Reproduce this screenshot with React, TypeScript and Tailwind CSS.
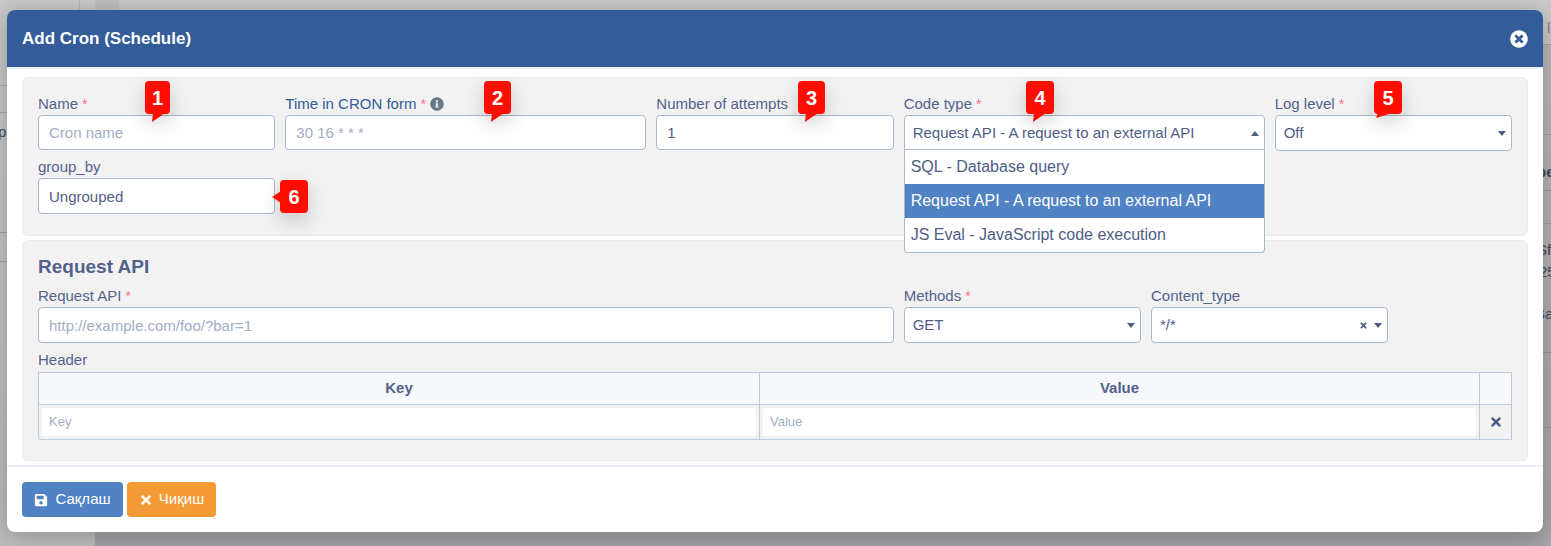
import React from 'react';
import { FaInfoCircle, FaSave, FaTimes, FaTimesCircle } from 'react-icons/fa';

const Req = () => <span className="text-[#f8727f] ml-[4px] text-[14px]">*</span>;

const Label = ({ text, required, blue }: { text: string; required?: boolean; blue?: boolean }) => (
  <div className={`h-[20px] leading-[20px] text-[15px] whitespace-nowrap ${blue ? 'text-[#335c98]' : 'text-[#53628a]'}`}>
    {text}
    {required && <Req />}
  </div>
);

const Input = ({ placeholder, value, height = 'h-[35px]' }: { placeholder?: string; value?: string; height?: string }) => (
  <div className={`${height} mt-[1px] rounded-[4px] border border-[#a9b7cd] bg-white px-[10px] pt-[2px] flex items-center text-[15px]`}>
    {value ? <span className="text-[#4f5d85]">{value}</span> : <span className="text-[#a0aec6]">{placeholder}</span>}
  </div>
);

const Arrow = ({ up }: { up?: boolean }) => (
  <svg width="8" height="5" viewBox="0 0 8 5" className="shrink-0">
    <path d={up ? 'M0 5 L4 0 L8 5 Z' : 'M0 0 L8 0 L4 5 Z'} fill="#4f5d85" />
  </svg>
);

const Select = ({ value, clear }: { value: string; clear?: boolean }) => (
  <div className="mt-[1px] h-[36px] rounded-[4px] border border-[#a9b7cd] bg-white pl-[8px] pr-[5px] flex items-center text-[15px] text-[#4f5d85]">
    <span className="flex-1">{value}</span>
    <span className="flex items-center">
      {clear && <FaTimes className="text-[9px] mr-[6px]" />}
      <Arrow />
    </span>
  </div>
);

type Tail = 'down' | 'downFlat' | 'left';

const Callout = ({ n, className, tail }: { n: number; className: string; tail: Tail }) => (
  <div className={`absolute z-20 flex items-center justify-center rounded-[4px] bg-[#fe0d00] text-white font-bold text-[20px] shadow-[0_8px_20px_rgba(0,0,0,0.18)] ${className}`}>
    {n}
    {tail === 'down' && (
      <svg width="14" height="10" viewBox="0 0 14 10" className="absolute left-[6px] top-full -mt-[1px]">
        <path d="M2 0 L14 0 L1 9 Z" fill="#fe0d00" />
      </svg>
    )}
    {tail === 'downFlat' && (
      <svg width="16" height="7" viewBox="0 0 16 7" className="absolute left-[2px] top-full -mt-[1px]">
        <path d="M2 0 L16 0 L0 5 Z" fill="#fe0d00" />
      </svg>
    )}
    {tail === 'left' && (
      <svg width="9" height="12" viewBox="0 0 9 12" className="absolute right-full top-[11px] -mr-[1px]">
        <path d="M9 0 L0 6 L9 12 Z" fill="#fe0d00" />
      </svg>
    )}
  </div>
);

const BackdropText = ({ className, children }: { className: string; children: React.ReactNode }) => (
  <span className={`absolute text-[15px] leading-[20px] text-[#3e4658] ${className}`}>{children}</span>
);

const App: React.FC = () => {
  return (
    <div className="relative h-[546px] w-[1551px] overflow-hidden bg-gradient-to-b from-[#cbcbcb] to-[#a3a3a6] pl-[7px] pt-[10px] font-['Liberation_Sans',sans-serif]">
      {/* Page behind the modal */}
      <div className="absolute left-0 top-0 h-full w-[95px] bg-gradient-to-b from-[#c9c9c9] to-[#bdbdbd]" />
      <div className="absolute left-[79px] top-0 h-[10px] w-px bg-[#b5b5b5]" />
      <div className="absolute left-[95px] top-0 h-[10px] w-[24px] bg-[#bfbfbf]" />
      <div className="absolute right-0 top-[44px] h-[502px] w-[8px] bg-gradient-to-b from-[#b9b9bb] to-[#a6a6a9]" />
      <div className="absolute left-0 top-[85px] h-px w-[7px] bg-[#aaaaaa]" />
      <div className="absolute left-0 top-[112px] h-px w-[7px] bg-[#aaaaaa]" />
      <div className="absolute left-0 top-[232px] h-px w-[7px] bg-[#a0a0a0]" />
      <div className="absolute left-0 top-[261px] h-px w-[7px] bg-[#a0a0a0]" />
      <div className="absolute right-0 top-[44px] h-px w-[8px] bg-[#9f9f9f]" />
      <div className="absolute right-0 top-[134px] h-px w-[8px] bg-[#9f9f9f]" />
      <div className="absolute right-0 top-[190px] h-px w-[8px] bg-[#8f8f95]" />
      <div className="absolute right-0 top-[223px] h-px w-[8px] bg-[#9a9a9a]" />
      <div className="absolute right-0 top-[352px] h-px w-[8px] bg-[#8f8f92]" />
      <div className="absolute right-0 top-[427px] h-px w-[8px] bg-[#9a9a9d]" />
      <BackdropText className="left-[-2px] top-[122px]">p</BackdropText>
      <BackdropText className="left-[1547px] top-[18px] text-[#7d8088]">lc</BackdropText>
      <BackdropText className="left-[1537px] top-[162px] font-bold">pe</BackdropText>
      <BackdropText className="left-[1537px] top-[240px]">Sf</BackdropText>
      <BackdropText className="left-[1539px] top-[262px]">25</BackdropText>
      <BackdropText className="left-[1535px] top-[304px]">Ba</BackdropText>

      {/* Modal */}
      <div className="relative z-10 flex h-[522px] w-[1536px] flex-col overflow-hidden rounded-[8px] bg-white shadow-[0_4px_24px_rgba(0,0,0,0.25)]">
        <div className="flex h-[57px] shrink-0 items-center justify-between bg-[#335c98] px-[15px] text-white">
          <div className="text-[17px] font-bold">Add Cron (Schedule)</div>
          <FaTimesCircle className="text-[18px]" />
        </div>
        <div className="h-[2px] shrink-0 bg-[#e9eef7]" />

        <div className="flex-1 px-[15px] pt-[8px]">
          {/* Main fields */}
          <div className="h-[159px] rounded-[6px] border border-[#e6ebf4] bg-[#f2f2f3] px-[15px] pt-[16px]">
            <div className="grid grid-cols-12 gap-x-[10px]">
              <div className="col-span-2">
                <Label text="Name" required />
                <Input placeholder="Cron name" />
              </div>
              <div className="col-span-3">
                <div className="flex items-center">
                  <Label text="Time in CRON form" required blue />
                  <FaInfoCircle className="ml-[4px] text-[14px] text-[#6c7a86]" />
                </div>
                <Input placeholder="30 16 * * *" />
              </div>
              <div className="col-span-2">
                <Label text="Number of attempts" />
                <Input value="1" />
              </div>
              <div className="relative col-span-3">
                <Label text="Code type" required />
                <div className="mt-[1px] flex h-[35px] items-center rounded-t-[4px] border border-[#a9b7cd] bg-white pl-[8px] pr-[5px] pt-[2px] text-[15px] text-[#4f5d85]">
                  <span className="flex-1">Request API - A request to an external API</span>
                  <Arrow up />
                </div>
                {/* Open dropdown */}
                <div className="absolute left-0 right-0 top-[56px] z-10 overflow-hidden rounded-b-[4px] border border-t-0 border-[#a9b7cd] bg-white text-[16px] text-[#4f5d85]">
                  <div className="flex h-[34px] items-center px-[6px]">SQL - Database query</div>
                  <div className="flex h-[34px] items-center bg-[#5082c4] px-[6px] text-white">Request API - A request to an external API</div>
                  <div className="flex h-[34px] items-center px-[6px]">JS Eval - JavaScript code execution</div>
                </div>
              </div>
              <div className="col-span-2">
                <Label text="Log level" required />
                <Select value="Off" />
              </div>
              <div className="col-span-2 mt-[6px]">
                <Label text="group_by" />
                <Input value="Ungrouped" height="h-[36px]" />
              </div>
            </div>
          </div>

          {/* Request API */}
          <div className="mt-[4px] h-[221px] rounded-[6px] border border-[#e6ebf4] bg-[#f2f2f3] px-[15px] pt-[14px]">
            <div className="h-[24px] text-[19px] font-bold leading-[24px] text-[#53628a]">Request API</div>
            <div className="mt-[7px] grid grid-cols-12 gap-x-[10px]">
              <div className="col-span-7">
                <Label text="Request API" required />
                <Input placeholder="http://example.com/foo/?bar=1" height="h-[36px]" />
              </div>
              <div className="col-span-2">
                <Label text="Methods" required />
                <Select value="GET" />
              </div>
              <div className="col-span-2">
                <Label text="Content_type" />
                <Select value="*/*" clear />
              </div>
            </div>
            <div className="mt-[7px]">
              <Label text="Header" />
            </div>
            <div className="mt-[2px] grid h-[67px] grid-cols-[721px_720px_32px] grid-rows-[32px_35px] border-l border-t border-[#bccbe0] text-[15px]">
              <div className="flex items-center justify-center border-b border-r border-[#bccbe0] bg-[#f7f8fc] font-bold text-[#53628a]">Key</div>
              <div className="flex items-center justify-center border-b border-r border-[#bccbe0] bg-[#f7f8fc] font-bold text-[#53628a]">Value</div>
              <div className="border-b border-r border-[#bccbe0] bg-[#f7f8fc]" />
              <div className="border-b border-r border-[#bccbe0] p-[3px]">
                <div className="flex h-full items-center rounded-[2px] bg-white px-[7px] text-[13px] text-[#a0aec6]">Key</div>
              </div>
              <div className="border-b border-r border-[#bccbe0] p-[3px]">
                <div className="flex h-full items-center rounded-[2px] bg-white px-[7px] text-[13px] text-[#a0aec6]">Value</div>
              </div>
              <div className="flex items-center justify-center border-b border-r border-[#bccbe0]">
                <FaTimes className="text-[14px] text-[#4f5d85]" />
              </div>
            </div>
          </div>
        </div>

        {/* Footer */}
        <div className="h-[2px] shrink-0 bg-[#e9eef7]" />
        <div className="flex h-[65px] shrink-0 gap-[4px] px-[15px] pt-[15px]">
          <button className="flex h-[35px] w-[101px] items-center justify-center gap-[7px] rounded-[4px] bg-[#5082c4] text-[15px] font-medium text-white">
            <FaSave className="text-[14px]" />
            Сақлаш
          </button>
          <button className="flex h-[35px] w-[89px] items-center justify-center gap-[6px] rounded-[4px] bg-[#f59b35] text-[15px] font-medium text-white">
            <FaTimes className="text-[14px]" />
            Чиқиш
          </button>
        </div>
      </div>

      {/* Numbered callouts */}
      <Callout n={1} tail="down" className="left-[145px] top-[81px] h-[33px] w-[25px]" />
      <Callout n={2} tail="down" className="left-[484px] top-[81px] h-[33px] w-[27px]" />
      <Callout n={3} tail="down" className="left-[798px] top-[81px] h-[33px] w-[27px]" />
      <Callout n={4} tail="down" className="left-[1026px] top-[81px] h-[33px] w-[28px]" />
      <Callout n={5} tail="downFlat" className="left-[1374px] top-[81px] h-[33px] w-[28px]" />
      <Callout n={6} tail="left" className="left-[280px] top-[180px] h-[33px] w-[28px]" />
    </div>
  );
};

export default App;
